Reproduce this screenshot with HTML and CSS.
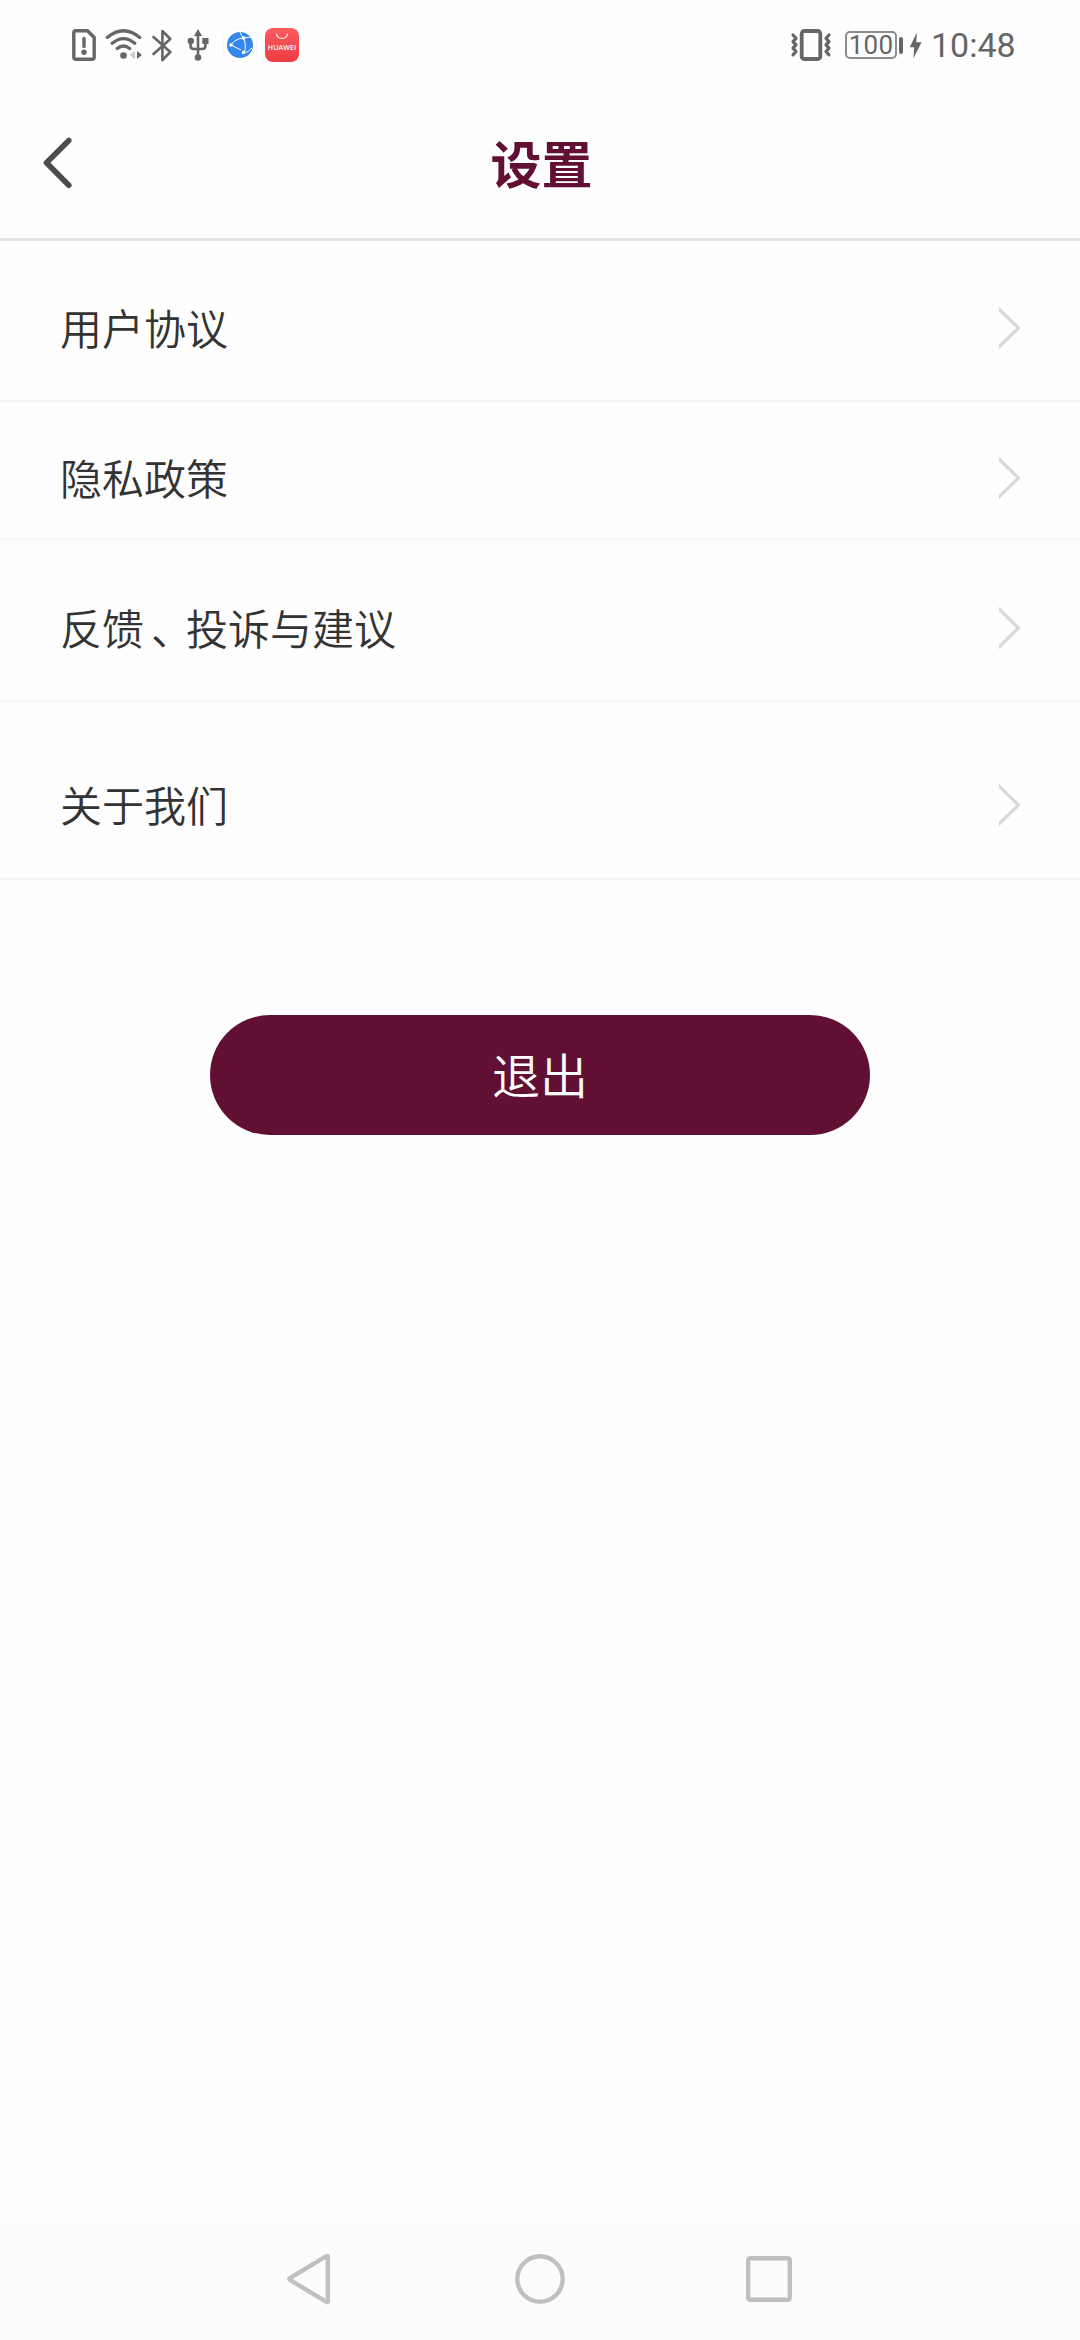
FILE: index.html
```html
<!DOCTYPE html>
<html lang="zh-CN">
<head>
<meta charset="utf-8">
<title>设置</title>
<link rel="stylesheet" href="styles.css">
</head>
<body>
<div class="screen">
  <div class="status">
    <div class="status-left">
      <svg class="sim" width="24" height="32" viewBox="0 0 24 32" fill="none" stroke="#666" stroke-width="3.4" stroke-linejoin="round" stroke-linecap="round"><path d="M3.5 1.8H15.5L22.2 8.5V28.3Q22.2 30.2 20.2 30.2H3.8Q1.8 30.2 1.8 28.3V3.7Q1.8 1.8 3.5 1.8Z"/><path d="M12 9.5V17.5"/><circle cx="12" cy="23.3" r="2.7" fill="#666" stroke="none"/></svg>
      <svg class="wifi" width="38" height="32" viewBox="0 0 38 32" fill="none" stroke="#666" stroke-width="3.2" stroke-linecap="round"><path d="M2.3 8.5Q18.5 -5 34.7 8.5M7.2 14.3Q18.5 4.8 29.8 14.3M12.3 19.5Q18.5 14.5 24.7 19.5"/><circle cx="18.5" cy="26.5" r="3.3" fill="#666" stroke="none"/><path d="M30 22V30L24.5 26Z" fill="#ccc" stroke="none"/><path d="M32 22V30L37 26Z" fill="#666" stroke="none"/></svg>
      <svg class="bluetooth" width="20" height="33" viewBox="0 0 20 33" fill="none" stroke="#666" stroke-width="2.6" stroke-linejoin="round" stroke-linecap="round"><path d="M1.5 8L18.3 23L10.4 31V2L18.3 10L1.5 25"/></svg>
      <svg class="usb" width="22" height="33" viewBox="0 0 22 33" fill="none" stroke="#666" stroke-width="2.6"><path d="M11 6V28M3.6 12V17Q3.6 20 7 20H15Q18.4 20 18.4 17V12"/><path d="M11 0L15 7H7Z" fill="#666" stroke="none"/><circle cx="3.8" cy="12" r="3.2" fill="#666" stroke="none"/><path d="M15.3 9H21.5V15H15.3Z" fill="#666" stroke="none"/><circle cx="11" cy="28.5" r="3.3" fill="#666" stroke="none"/></svg>
      <svg class="browser" width="34" height="34" viewBox="0 0 34 34"><rect x=".5" y=".5" width="33" height="33" rx="7" fill="#fff" stroke="#f6f6f6"/><circle cx="17" cy="17" r="13" fill="#3487ef"/><g fill="none" stroke="#fff" stroke-width="1"><path d="M8 17Q12 11 20 10L28 9M8 17L18 22M20.5 10Q24 18 21 25M20 25Q25 25 29 20M20 10L17 4"/></g><g fill="#fff"><circle cx="8" cy="17" r="1.8"/><circle cx="20.5" cy="10" r="1.8"/><circle cx="20.5" cy="24.5" r="1.8"/></g></svg>
      <div class="store"><svg width="14" height="7" viewBox="0 0 14 7" fill="none" stroke="#fff" stroke-width="1.1" stroke-linecap="round"><path d="M1.5 1Q2.5 5.5 7 5.5T12.5 1"/></svg><span>HUAWEI</span></div>
    </div>
    <div class="status-right">
      <svg class="vibrate" width="42" height="32" viewBox="0 0 42 32" fill="none" stroke="#666" stroke-linejoin="round" stroke-linecap="round"><rect x="11.7" y="2" width="18.6" height="28" rx="2.5" stroke-width="3.8"/><path stroke-width="3.2" d="M3 6L6 9.3L3 12.6L6 15.9L3 19.2L6 22.5L3 25.8M39 6L36 9.3L39 12.6L36 15.9L39 19.2L36 22.5L39 25.8"/></svg>
      <div class="battery">100</div>
      <div class="battery-cap"></div>
      <svg class="bolt" width="13" height="27" viewBox="0 0 13 27"><path d="M7.8 .5L.8 15.2H5.2L4.4 26.2L12.6 10.2H7.3Z" fill="#666"/></svg>
      <span class="time">10:48</span>
    </div>
  </div>
  <header class="header">
    <svg class="back" width="34" height="54" viewBox="0 0 34 54" fill="none" stroke="#4c4c4c" stroke-width="5.6" stroke-linecap="round" stroke-linejoin="round"><path d="M28.8 4.5L6.5 26.7L28.8 49.3"/></svg>
    <h1>设置</h1>
  </header>
  <main>
    <div class="row agreement"><span>用户协议</span><svg class="arrow" width="21" height="42" viewBox="0 0 21 42"><path d="M-1 1L19.6 21L-1 41"/></svg></div>
    <div class="row privacy"><span>隐私政策</span><svg class="arrow" width="21" height="42" viewBox="0 0 21 42"><path d="M-1 1L19.6 21L-1 41"/></svg></div>
    <div class="row feedback"><span>反馈<i class="pause">、</i>投诉与建议</span><svg class="arrow" width="21" height="42" viewBox="0 0 21 42"><path d="M-1 1L19.6 21L-1 41"/></svg></div>
    <div class="row about"><span>关于我们</span><svg class="arrow" width="21" height="42" viewBox="0 0 21 42"><path d="M-1 1L19.6 21L-1 41"/></svg></div>
    <button class="logout">退出</button>
  </main>
  <nav class="nav">
    <svg width="52" height="54" viewBox="0 0 52 54"><path d="M42.4 4.2Q43.8 3.4 43.8 5V49Q43.8 50.6 42.4 49.8L6.3 28.2Q4.3 27 6.3 25.8Z"/></svg>
    <svg width="54" height="54" viewBox="0 0 54 54"><circle cx="27" cy="27" r="22.7"/></svg>
    <svg width="50" height="54" viewBox="0 0 50 54"><rect x="4.2" y="6.2" width="41.6" height="41.6" rx="2"/></svg>
  </nav>
</div>
</body>
</html>
```
FILE: styles.css
```css
* { box-sizing: border-box; }
body { margin: 0; background: #fefefe; font-family: "Noto Sans CJK SC", sans-serif; }
svg { display: block; flex: none; }
.screen { width: 1080px; height: 2340px; display: flex; flex-direction: column; }
.status { height: 90px; padding: 0 65px 0 72px; display: flex; justify-content: space-between; align-items: center; }
.status-left, .status-right { display: flex; align-items: center; }
.sim { margin-right: 9px; }
.wifi { margin-right: 9px; }
.bluetooth { margin-right: 15px; }
.usb { margin-right: 14px; }
.browser { margin-right: 8px; }
.store { width: 34px; height: 34px; border-radius: 8px; background: linear-gradient(#fb5b5f, #ec3c43); display: flex; flex-direction: column; align-items: center; padding-top: 5px; }
.store span { font: 600 7px/8px "Open Sans", sans-serif; color: #fff; margin-top: 4px; letter-spacing: .1px; }
.vibrate { margin-right: 13px; }
.battery { width: 52px; height: 28px; border: 2px solid #8c8c8c; border-radius: 5px; font: 400 26px/24px Roboto, sans-serif; letter-spacing: .2px; color: #666; text-align: center; }
.battery-cap { width: 4px; height: 17px; border-radius: 2px; background: #666; margin: 0 6px 0 2px; }
.time { font: 400 34px/40px Roboto, sans-serif; color: #666; margin-left: 9px; width: 84px; }
.header { height: 151px; border-bottom: 3px solid #e5e5e5; display: grid; grid-template-columns: 76px 1fr 76px; padding-top: 2px; align-items: start; }
.back { margin: 44px 0 0 40px; }
h1 { margin: 33px 0 0 3px; font-size: 51px; line-height: 74px; font-weight: 700; color: #611034; text-align: center; }
.row { display: flex; justify-content: space-between; align-items: flex-end; padding: 0 60px 51px; border-bottom: 3px solid #f7f7f7; }
.row span { font-size: 42px; line-height: 60px; font-weight: 350; color: #333; margin-bottom: -8px; }
.pause { font-style: normal; padding-left: 7px; letter-spacing: -7px; }
.arrow { fill: none; stroke: #d8d8d8; stroke-width: 3.2; }
.agreement { height: 162px; }
.privacy { height: 138px; padding-bottom: 39px; }
.feedback { height: 162px; }
.about { height: 177px; }
.logout { display: block; width: 660px; height: 120px; margin: 135px auto 0; padding: 0 0 4px; border: 0; border-radius: 60px; background: #611034; color: #fff; font: 350 48px/116px "Noto Sans CJK SC", sans-serif; }
.nav { margin-top: auto; height: 122px; background: #fcfcfc; display: flex; justify-content: space-between; align-items: center; padding: 0 286px 0 284px; }
.nav svg { fill: none; stroke: #c0c0c0; stroke-width: 4.4; stroke-linejoin: round; }
```
